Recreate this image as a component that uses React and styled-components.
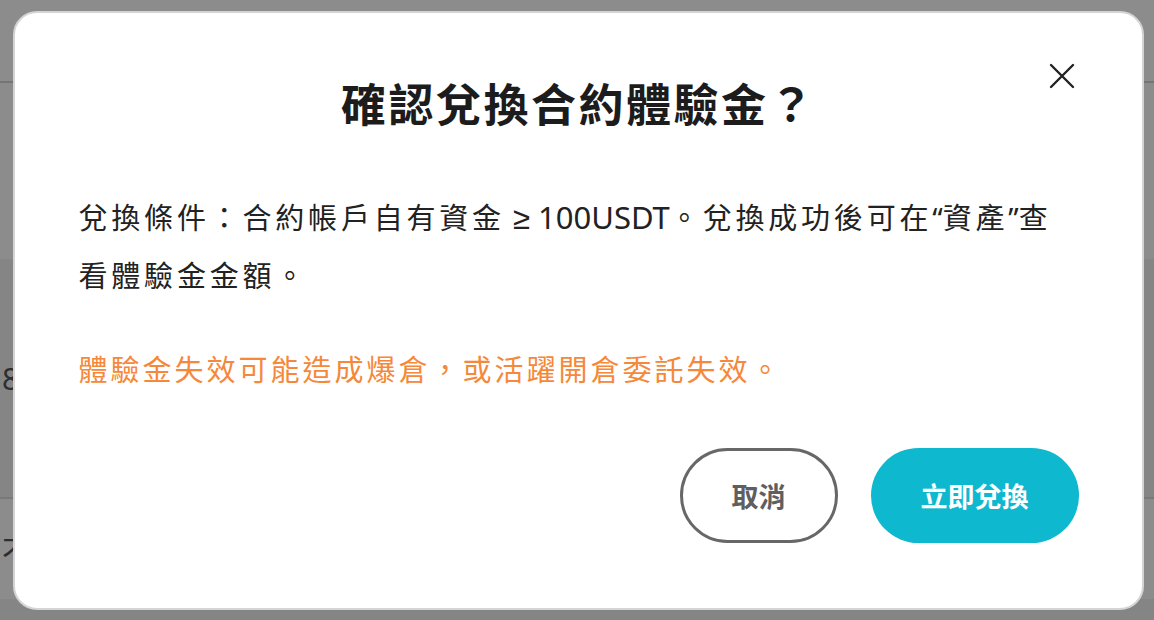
import React from "react";
import styled, { createGlobalStyle } from "styled-components";

const Global = createGlobalStyle`
  html, body { margin: 0; padding: 0; }
  body {
    background: #ffffff;
    font-family: "Noto Sans CJK TC", "Noto Sans", sans-serif;
    overflow: hidden;
  }
`;

const Page = styled.div`
  width: 1154px;
  height: 620px;
  display: flex;
  flex-direction: column;
  background: #ffffff;
`;

const Header = styled.header`
  height: 83px;
  flex: none;
  border-bottom: 2px solid #d6d6d6;
  box-sizing: border-box;
`;

const Section = styled.section`
  flex: none;
  height: ${(p) => p.$h}px;
  background: ${(p) => p.$bg || "#ffffff"};
  border-bottom: ${(p) => (p.$line ? "2px solid #dcdcdc" : "none")};
  box-sizing: border-box;
  display: flex;
  align-items: center;
  padding-left: 2px;
  color: #555;
  font-size: 30px;
  font-family: "Noto Sans", "Noto Sans CJK TC", sans-serif;
`;

const Footer = styled.div`
  flex: 1;
  background: #f2f2f2;
`;

const Overlay = styled.div`
  position: fixed;
  inset: 0;
  background: rgba(0, 0, 0, 0.45);
  display: flex;
  align-items: center;
  justify-content: center;
`;

const Modal = styled.div`
  position: relative;
  box-sizing: border-box;
  width: 1131px;
  height: 599px;
  margin-left: 2px;
  background: #ffffff;
  border: 2px solid #d4d4d4;
  border-radius: 24px;
  padding: 63px 63px 0 64px;
  display: flex;
  flex-direction: column;
`;

const CloseButton = styled.button`
  position: absolute;
  top: 50px;
  right: 67px;
  width: 26px;
  height: 26px;
  padding: 0;
  border: none;
  background: transparent;
  cursor: pointer;
  display: flex;
  align-items: center;
  justify-content: center;
`;

const Title = styled.h2`
  margin: 0;
  text-align: center;
  font-size: 45px;
  line-height: 54px;
  font-weight: 700;
  letter-spacing: 2.5px;
  color: #1c1c1c;
`;

const Body = styled.p`
  margin: 58px 4px 0 0;
  font-size: 29px;
  line-height: 57px;
  letter-spacing: 3.8px;
  color: #222222;
`;

const Latin = styled.span`
  font-family: "Noto Sans", sans-serif;
  letter-spacing: 0;
  font-size: ${(p) => (p.$wide ? "31px" : "29px")};
`;

const Warning = styled.p`
  margin: 37px 0 0;
  font-size: 29px;
  line-height: 57px;
  letter-spacing: 3px;
  color: #f5883a;
`;

const Actions = styled.div`
  margin-top: 51px;
  display: flex;
  justify-content: flex-end;
  gap: 33px;
`;

const Button = styled.button`
  box-sizing: border-box;
  height: 95px;
  width: ${(p) => p.$w}px;
  border-radius: 48px;
  font-family: "Noto Sans CJK TC", sans-serif;
  font-size: 27px;
  font-weight: 700;
  cursor: pointer;
  border: ${(p) => (p.$primary ? "none" : "3px solid #676767")};
  background: ${(p) => (p.$primary ? "#0eb8cf" : "#ffffff")};
  color: ${(p) => (p.$primary ? "#ffffff" : "#5f5f5f")};
`;

export default function App() {
  return (
    <>
      <Global />
      <Page>
        <Header />
        <Section $h={176} />
        <Section $h={240} $bg="#f3f3f3" $line>
          8
        </Section>
        <Section $h={100}>不</Section>
        <Footer />
      </Page>
      <Overlay>
        <Modal role="dialog" aria-modal="true">
          <CloseButton aria-label="關閉">
            <svg width="26" height="26" viewBox="0 0 26 26">
              <path
                d="M2 2 L24 24 M24 2 L2 24"
                stroke="#222"
                strokeWidth="2.4"
                strokeLinecap="round"
                fill="none"
              />
            </svg>
          </CloseButton>
          <Title>確認兌換合約體驗金？</Title>
          <Body>
            兌換條件：合約帳戶自有資金<Latin $wide> ≥ 100USDT</Latin>。兌換成功後可在<Latin>“</Latin>資產<Latin>”</Latin>查看體驗金金額。
          </Body>
          <Warning>體驗金失效可能造成爆倉，或活躍開倉委託失效。</Warning>
          <Actions>
            <Button $w={158}>取消</Button>
            <Button $w={208} $primary>
              立即兌換
            </Button>
          </Actions>
        </Modal>
      </Overlay>
    </>
  );
}
